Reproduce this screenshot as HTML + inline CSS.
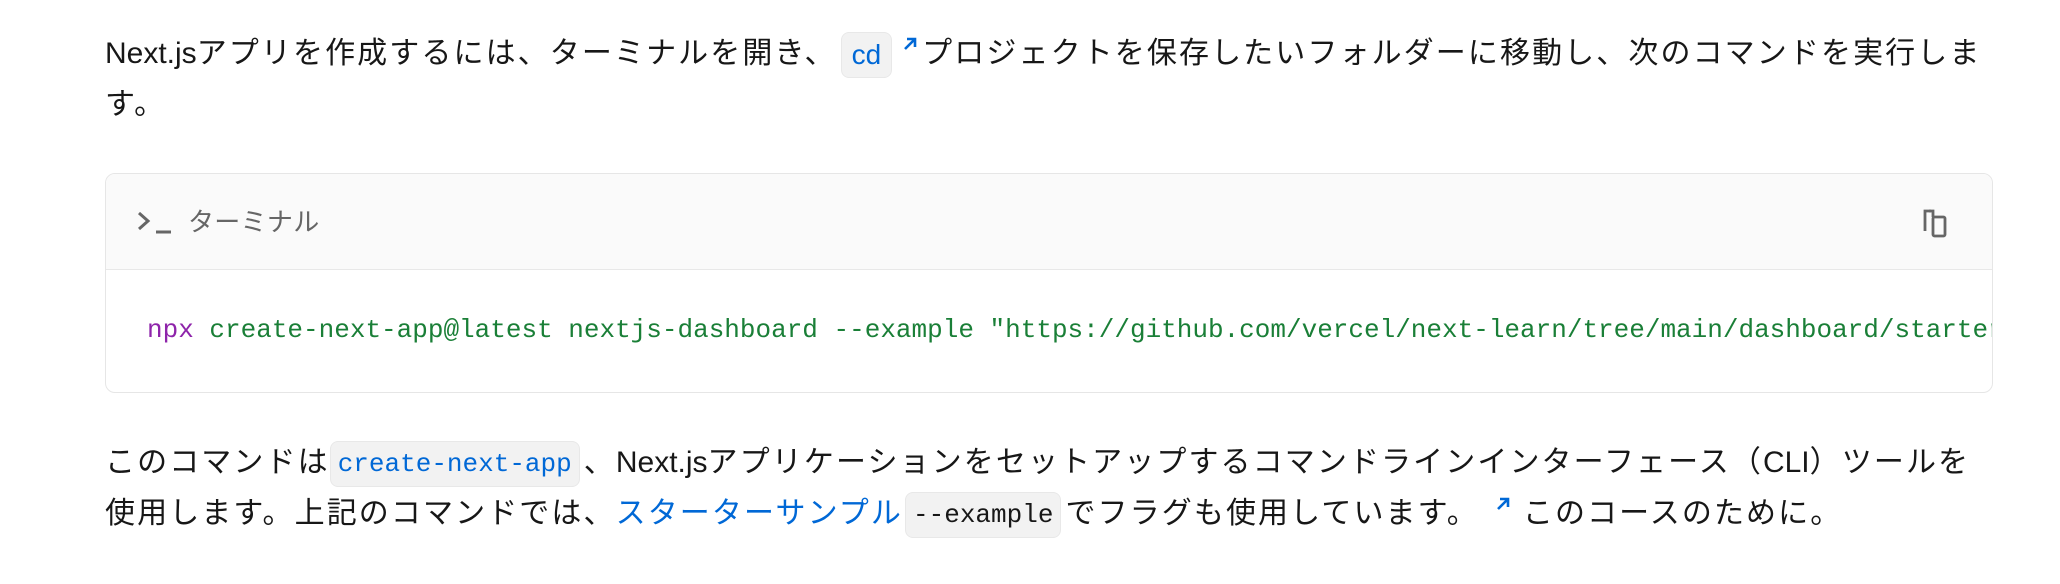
<!DOCTYPE html>
<html><head><meta charset="utf-8"><style>
*{margin:0;padding:0;box-sizing:border-box}
body{width:2060px;height:584px;background:#fff;overflow:hidden;font-family:"Liberation Sans","Noto Sans CJK JP",sans-serif;color:#171717;position:relative}
.l{position:absolute;left:105px;font-size:30px;letter-spacing:2.1px;line-height:40px;white-space:nowrap}
.lat{letter-spacing:0}
.pill{display:inline-block;background:#f2f2f2;border:1px solid #e8e8e8;border-radius:8px;padding:0 7px;line-height:44px;vertical-align:middle;font-family:"Liberation Mono",monospace;font-size:26px;letter-spacing:0;color:#0068d6}
.blue{color:#0068d6}
.arr{display:inline-block;width:22px;vertical-align:top;margin-top:2px}
.box{position:absolute;left:105px;top:173px;width:1888px;height:220px;border:1.5px solid #e6e6e6;border-radius:10px;overflow:hidden}
.hd{height:96px;background:#fafafa;border-bottom:1.5px solid #e8e8e8;position:relative}
.code{position:absolute;left:41px;top:138px;font-family:"Liberation Mono",monospace;font-size:26px;line-height:36px;white-space:nowrap;color:#1a7f37}
</style></head><body>
<div class="l" style="top:32px"><span class="lat">Next.js</span>アプリを作成するには、ターミナルを開き、<span class="pill" style="font-family:'Liberation Sans',sans-serif;font-size:28px;padding:0 10px;margin:0 8px 0 4px">cd</span><svg class="arr" viewBox="0 0 22 22" height="22"><path d="M5 15L15 5M7 5h8v8" stroke="#0068d6" stroke-width="2.6" fill="none"/></svg>プロジェクトを保存したいフォルダーに移動し、次のコマンドを実行しま</div>
<div class="l" style="top:85px">す。</div>
<div class="box">
 <div class="hd">
  <svg style="position:absolute;left:31px;top:36px" width="36" height="26" viewBox="0 0 36 26"><path d="M2 3l9 8-9 8" stroke="#666" stroke-width="3" fill="none"/><path d="M19 22h15" stroke="#666" stroke-width="3"/></svg>
  <div style="position:absolute;left:82px;top:30px;font-size:26px;letter-spacing:0.3px;line-height:36px;color:#666">ターミナル</div>
  <svg style="position:absolute;left:1814px;top:33px" width="32" height="34" viewBox="0 0 32 34"><path d="M11 4H5v20" stroke="#666" stroke-width="2.8" fill="none"/><rect x="13" y="10" width="12" height="19" rx="1.5" stroke="#666" stroke-width="2.8" fill="none"/><path d="M9 4h4v6" stroke="#666" stroke-width="2.8" fill="none"/></svg>
 </div>
 <div class="code"><span style="color:#8e24aa">npx</span> create-next-app@latest nextjs-dashboard --example "https://github.com/vercel/next-learn/tree/main/dashboard/starter-example"</div>
</div>
<div class="l" style="top:441px">このコマンドは<span class="pill" style="margin:0 4px 0 0">create-next-app</span>、<span class="lat">Next.js</span>アプリケーションをセットアップするコマンドラインインターフェース（<span class="lat">CLI</span>）ツールを</div>
<div class="l" style="top:492px">使用します。上記のコマンドでは、<span class="blue">スターターサンプル</span><span class="pill" style="color:#171717;margin:0 4px 0 2px">--example</span>でフラグも使用しています。<svg class="arr" viewBox="0 0 22 22" height="22" style="margin-left:14px;margin-right:8px"><path d="M5 15L15 5M7 5h8v8" stroke="#0068d6" stroke-width="2.6" fill="none"/></svg>このコースのために。</div>
</body></html>
